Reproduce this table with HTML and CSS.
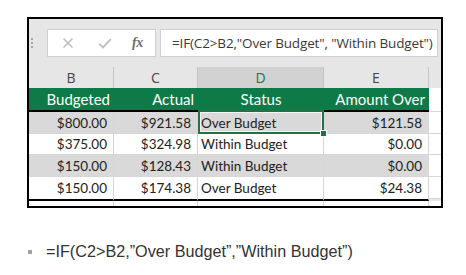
FILE: index.html
```html
<!DOCTYPE html>
<html>
<head>
<meta charset="utf-8">
<link rel="stylesheet" href="styles.css">
</head>
<body>
<div class="sheet">
  <div class="toolbar">
    <div class="grip"><i></i><i></i><i></i></div>
    <div class="fbtns">
      <svg class="ic-x" width="12" height="12" viewBox="0 0 12 12"><path d="M1.5 1.5L10.5 10.5M10.5 1.5L1.5 10.5" stroke="#bdbdbd" stroke-width="1.5" fill="none"/></svg>
      <svg class="ic-ok" width="14" height="11" viewBox="0 0 14 11"><path d="M1.2 5.8L5 9.4L12.8 1.2" stroke="#bdbdbd" stroke-width="1.8" fill="none"/></svg>
      <span class="fx">fx</span>
    </div>
    <div class="fbox">=IF(C2&gt;B2,"Over Budget", "Within Budget")</div>
  </div>
  <div class="row colheads">
    <div class="c">B</div><div class="c">C</div><div class="c cur">D</div><div class="c">E</div><div class="c pad"></div>
  </div>
  <div class="row hdr">
    <div class="c r">Budgeted</div><div class="c r">Actual</div><div class="c m">Status</div><div class="c r">Amount Over</div><div class="c pad"></div>
  </div>
  <div class="row data g">
    <div class="c r">$800.00</div><div class="c r">$921.58</div><div class="c l">Over Budget</div><div class="c r">$121.58</div><div class="c pad"></div>
  </div>
  <div class="row data h21">
    <div class="c r">$375.00</div><div class="c r">$324.98</div><div class="c l">Within Budget</div><div class="c r">$0.00</div><div class="c pad"></div>
  </div>
  <div class="row data g">
    <div class="c r">$150.00</div><div class="c r">$128.43</div><div class="c l">Within Budget</div><div class="c r">$0.00</div><div class="c pad"></div>
  </div>
  <div class="row data last">
    <div class="c r">$150.00</div><div class="c r">$174.38</div><div class="c l">Over Budget</div><div class="c r">$24.38</div><div class="c pad"></div>
  </div>
  <div class="row blank">
    <div class="c"></div><div class="c"></div><div class="c"></div><div class="c"></div><div class="c pad"></div>
  </div>
  <div class="selbox"></div>
  <div class="handle"></div>
</div>
<ul class="notes">
  <li>=IF(C2&gt;B2,”Over Budget”,”Within Budget”)</li>
</ul>
</body>
</html>
```
FILE: styles.css
```css
html, body {
  margin: 0;
  padding: 0;
  background: #fff;
}
.sheet {
  position: relative;
  margin: 17px 0 0 27px;
  width: 416px;
  height: 191px;
  box-sizing: border-box;
  border: 2px solid #000;
  background: #e6e6e6;
  display: flex;
  flex-direction: column;
}
.toolbar {
  height: 48px;
  box-sizing: border-box;
  padding: 10px 3px 10px 2px;
  display: flex;
  align-items: stretch;
}
.grip {
  width: 2px;
  display: flex;
  flex-direction: column;
  justify-content: center;
  gap: 2px;
  margin-right: 14px;
}
.grip i {
  display: block;
  width: 2px;
  height: 2px;
  background: #a8a8a8;
}
.fbtns {
  width: 109px;
  box-sizing: border-box;
  background: #fff;
  border: 1px solid #cfcfcf;
  display: flex;
  align-items: center;
  padding-left: 14px;
}
.ic-x { margin-right: 24px; }
.ic-ok { margin-right: 20px; }
.fx {
  font-family: "Liberation Serif", serif;
  font-style: italic;
  font-weight: bold;
  font-size: 14px;
  color: #6e6e6e;
  letter-spacing: -0.5px;
}
.fbox {
  flex: 1;
  margin-left: 4px;
  box-sizing: border-box;
  background: #fff;
  border: 1px solid #cfcfcf;
  display: flex;
  align-items: center;
  padding-left: 11px;
  font-family: "Open Sans", sans-serif;
  font-size: 13.5px;
  letter-spacing: -0.15px;
  color: #3a3a3a;
  white-space: nowrap;
  overflow: hidden;
}
.row {
  display: grid;
  grid-template-columns: 85px 84px 126px 105px 1fr;
}
.c {
  box-sizing: border-box;
  white-space: nowrap;
  overflow: hidden;
}
.colheads {
  height: 21px;
  font-family: "Open Sans", sans-serif;
  font-size: 14px;
  color: #444;
}
.colheads .c {
  display: flex;
  align-items: center;
  justify-content: center;
  border-right: 1px solid #c4c4c4;
  line-height: 21px;
}
.colheads .cur {
  background: #d2d2d2;
  color: #217346;
}
.colheads .pad { border-right: 0; }
.hdr {
  height: 24px;
  font-family: Lato, sans-serif;
  font-size: 15px;
  color: #fff;
}
.hdr .c {
  background: #0e7a47;
  border-bottom: 2px solid #000;
  display: flex;
  align-items: center;
  padding-bottom: 1px;
}
.hdr .pad {
  background: #fff;
  border-bottom: 1px solid #d6d6d6;
}
.data {
  height: 22px;
  font-family: Lato, sans-serif;
  font-size: 13.5px;
  color: #222;
}
.data.h21 { height: 21px; }
.data .c, .blank .c {
  background: #fff;
  border-right: 1px solid #d6d6d6;
  border-bottom: 1px solid #d6d6d6;
  display: flex;
  align-items: center;
}
.data.g .c { background: #d9d9d9; }
.data.g .pad { background: #fff; }
.data .pad, .blank .pad { border-right: 0; }
.data.last { height: 24px; }
.data.last .c { border-bottom: 2px solid #000; }
.data.last .pad { border-bottom: 1px solid #d6d6d6; height: 22px; }
.blank { flex: 1; }
.blank .c { border-bottom: 0; }
.r { justify-content: flex-end; padding-right: 6px; }
.hdr .r { padding-right: 4px; }
.m { justify-content: center; }
.l { justify-content: flex-start; padding-left: 3px; }
.selbox {
  position: absolute;
  left: 169px;
  top: 91px;
  width: 126px;
  height: 24px;
  box-sizing: border-box;
  border: 2px solid #217346;
  box-shadow: inset 0 0 0 1px #f4f4f4;
}
.handle {
  position: absolute;
  left: 291px;
  top: 111px;
  width: 5px;
  height: 5px;
  background: #217346;
  border: 1px solid #fff;
}
.notes {
  list-style: none;
  margin: 34px 0 0 0;
  padding: 0 0 0 46px;
  font-family: "Liberation Sans", Arial, sans-serif;
  font-size: 16.2px;
  line-height: 18px;
  color: #333;
}
.notes li {
  position: relative;
}
.notes li::before {
  content: "";
  position: absolute;
  left: -18px;
  top: 8px;
  width: 4px;
  height: 4px;
  background: #a0a0a0;
}
```
